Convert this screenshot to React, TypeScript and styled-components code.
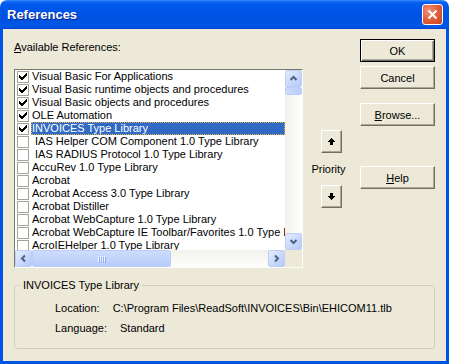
import styled, { createGlobalStyle } from "styled-components";

const GlobalStyle = createGlobalStyle`
  html, body {
    margin: 0;
    padding: 0;
    background: #ffffff;
  }
  body {
    font-family: "Liberation Sans", Arial, sans-serif;
    font-size: 11px;
    color: #000;
  }
`;

const Window = styled.div`
  width: 449px;
  height: 364px;
  display: flex;
  flex-direction: column;
`;

const TitleBar = styled.div`
  height: 29px;
  flex: none;
  display: flex;
  align-items: center;
  justify-content: space-between;
  padding: 0 6px 0 7px;
  border-radius: 7px 7px 0 0;
  background: linear-gradient(
    180deg,
    #3d8ef8 0px,
    #0a63f0 2px,
    #0058ee 5px,
    #0054e3 14px,
    #0052e0 21px,
    #005ae8 26px,
    #0046d5 29px
  );
  color: #fff;
  font: bold 13px "Liberation Sans", Arial, sans-serif;
  text-shadow: 1px 1px 0 #0a1f8c;
`;

const CloseButton = styled.div`
  width: 21px;
  height: 21px;
  box-sizing: border-box;
  border: 1px solid #fff;
  border-radius: 3px;
  background: radial-gradient(circle at 30% 30%, #f29377 0%, #e2613e 45%, #c9421f 100%);
  display: flex;
  align-items: center;
  justify-content: center;
`;

const Body = styled.div`
  flex: 1;
  display: flex;
  flex-direction: column;
  background: #ece9d8;
  border: 3px solid #0054e3;
  border-top: none;
  padding: 10px 11px 0 11px;
`;

const TopRow = styled.div`
  display: flex;
`;

const LeftCol = styled.div`
  width: 289px;
  display: flex;
  flex-direction: column;
`;

const FieldLabel = styled.div`
  margin-top: 2px;
  height: 13px;
  line-height: 13px;
`;

const ListBox = styled.div`
  margin-top: 15px;
  width: 289px;
  height: 199px;
  box-sizing: border-box;
  border: 1px solid;
  border-color: #7a7869 #fdfdfb #fdfdfb #7a7869;
  background: #fff;
  display: grid;
  grid-template-columns: 1fr 17px;
  grid-template-rows: 1fr 17px;
`;

const Rows = styled.div`
  overflow: hidden;
`;

const Row = styled.div`
  height: 13px;
  display: flex;
  align-items: center;
  padding-left: 2px;
`;

const CheckBox = styled.div`
  width: 12px;
  height: 12px;
  box-sizing: border-box;
  border: 1px solid #a5a39a;
  background: #fff;
  margin-right: 2px;
  flex: none;
  display: flex;
  align-items: center;
  justify-content: center;
`;

const ItemText = styled.div<{ $selected?: boolean }>`
  flex: 1;
  height: 13px;
  line-height: 13px;
  padding-left: 1px;
  white-space: pre;
  box-sizing: border-box;
  color: ${(p) => (p.$selected ? "#fff" : "#000")};
  background: ${(p) => (p.$selected ? "#316ac5" : "transparent")};
  outline: ${(p) => (p.$selected ? "1px dotted #e9b24a" : "none")};
  outline-offset: -1px;
`;

const VScroll = styled.div`
  display: flex;
  flex-direction: column;
  background: linear-gradient(90deg, #f3f1ec, #fefefe);
`;

const HScroll = styled.div`
  display: flex;
  background: linear-gradient(180deg, #f3f1ec, #fefefe);
`;

const Track = styled.div`
  flex: 1;
`;

const Corner = styled.div`
  background: #ece9d8;
`;

const ScrollButton = styled.div`
  width: 17px;
  height: 17px;
  flex: none;
  box-sizing: border-box;
  border: 1px solid #bccef6;
  border-radius: 2px;
  background: linear-gradient(135deg, #e4ecff 0%, #c6d7fc 60%, #b6cbf8 100%);
  display: flex;
  align-items: center;
  justify-content: center;
`;

const Thumb = styled.div<{ $size: number; $vertical?: boolean }>`
  flex: none;
  box-sizing: border-box;
  ${(p) => (p.$vertical ? `height: ${p.$size}px;` : `width: ${p.$size}px;`)}
  border: 1px solid #bccef6;
  border-radius: 2px;
  background: linear-gradient(
    ${(p) => (p.$vertical ? "90deg" : "180deg")},
    #cddcfd 0%,
    #c3d4fc 50%,
    #b8cbf9 100%
  );
  display: flex;
  align-items: center;
  justify-content: center;
`;

const Grip = styled.div`
  display: flex;
  gap: 1px;
`;

const GripLine = styled.div`
  width: 1px;
  height: 6px;
  background: #eef4fe;
  box-shadow: 1px 1px 0 #8cb0f8;
`;

const MidCol = styled.div`
  width: 57px;
  display: flex;
  flex-direction: column;
  align-items: center;
`;

const ButtonCol = styled.div`
  width: 75px;
  display: flex;
  flex-direction: column;
`;

const PushButton = styled.div<{ $default?: boolean; $gap?: number }>`
  height: 23px;
  width: 75px;
  box-sizing: border-box;
  margin-top: ${(p) => p.$gap ?? 0}px;
  display: flex;
  align-items: center;
  justify-content: center;
  background: #ece9d8;
  border: 1px solid;
  border-color: ${(p) => (p.$default ? "#000" : "#fff #716f64 #716f64 #fff")};
  box-shadow: ${(p) =>
    p.$default
      ? "inset 1px 1px 0 #fff, inset -1px -1px 0 #716f64, inset -2px -2px 0 #aca899"
      : "inset -1px -1px 0 #aca899"};
`;

const ArrowButton = styled.div<{ $gap: number }>`
  width: 21px;
  height: 23px;
  box-sizing: border-box;
  margin-top: ${(p) => p.$gap}px;
  display: flex;
  align-items: center;
  justify-content: center;
  background: #ece9d8;
  border: 1px solid;
  border-color: #fff #716f64 #716f64 #fff;
  box-shadow: inset -1px -1px 0 #aca899;
`;

const PriorityLabel = styled.div`
  margin-top: 10px;
  height: 13px;
  line-height: 13px;
  margin-right: 6px;
`;

const GroupBox = styled.fieldset`
  margin: 11px 0 0 0;
  padding: 0;
  height: 70px;
  box-sizing: border-box;
  border: 1px solid #d0d0bf;
  border-radius: 3px;
  display: flex;
  flex-direction: column;
  gap: 7px;
`;

const Legend = styled.legend`
  margin-left: 5px;
  padding: 0 3px;
  line-height: 13px;
`;

const InfoRow = styled.div<{ $first?: boolean }>`
  display: flex;
  gap: 13px;
  height: 13px;
  line-height: 13px;
  padding-left: 40px;
  margin-top: ${(p) => (p.$first ? "10px" : "0")};
`;

const U = styled.span`
  text-decoration: underline;
`;

type Ref = { name: string; checked?: boolean; selected?: boolean };

const refs: Ref[] = [
  { name: "Visual Basic For Applications", checked: true },
  { name: "Visual Basic runtime objects and procedures", checked: true },
  { name: "Visual Basic objects and procedures", checked: true },
  { name: "OLE Automation", checked: true },
  { name: "INVOICES Type Library", checked: true, selected: true },
  { name: " IAS Helper COM Component 1.0 Type Library" },
  { name: " IAS RADIUS Protocol 1.0 Type Library" },
  { name: "AccuRev 1.0 Type Library" },
  { name: "Acrobat" },
  { name: "Acrobat Access 3.0 Type Library" },
  { name: "Acrobat Distiller" },
  { name: "Acrobat WebCapture 1.0 Type Library" },
  { name: "Acrobat WebCapture IE Toolbar/Favorites 1.0 Type Library" },
  { name: "AcroIEHelper 1.0 Type Library" },
];

const Check = () => (
  <svg width="8" height="8" viewBox="0 0 8 8" shapeRendering="crispEdges">
    <path
      fill="#000"
      d="M7 0h1v1H7zM6 1h2v1H6zM0 2h1v1H0zM5 2h3v1H5zM0 3h2v1H0zM4 3h3v1H4zM0 4h6v1H0zM1 5h4v1H1zM2 6h2v1H2z"
    />
  </svg>
);

const Chevron = ({ dir }: { dir: "up" | "down" | "left" | "right" }) => {
  const rot = { up: 0, right: 90, down: 180, left: 270 }[dir];
  return (
    <svg width="9" height="9" viewBox="0 0 9 9">
      <polyline
        points="1.5,6 4.5,3 7.5,6"
        fill="none"
        stroke="#4d6185"
        strokeWidth="2"
        transform={`rotate(${rot} 4.5 4.5)`}
      />
    </svg>
  );
};

const BlackArrow = ({ down }: { down?: boolean }) => (
  <svg width="7" height="7" viewBox="0 0 7 7" shapeRendering="crispEdges">
    <path
      fill="#000"
      transform={down ? "rotate(180 3.5 3.5)" : undefined}
      d="M3 0h1v1H3zM2 1h3v1H2zM1 2h5v1H1zM0 3h7v1H0zM2 4h3v3H2z"
    />
  </svg>
);

export default function App() {
  return (
    <>
      <GlobalStyle />
      <Window>
        <TitleBar>
          <span>References</span>
          <CloseButton>
            <svg width="11" height="11" viewBox="0 0 11 11">
              <path d="M1.5 1.5 L9.5 9.5 M9.5 1.5 L1.5 9.5" stroke="#fff" strokeWidth="2" />
            </svg>
          </CloseButton>
        </TitleBar>
        <Body>
          <TopRow>
            <LeftCol>
              <FieldLabel>
                <U>A</U>vailable References:
              </FieldLabel>
              <ListBox>
                <Rows>
                  {refs.map((r) => (
                    <Row key={r.name}>
                      <CheckBox>{r.checked && <Check />}</CheckBox>
                      <ItemText $selected={r.selected}>{r.name}</ItemText>
                    </Row>
                  ))}
                </Rows>
                <VScroll>
                  <ScrollButton>
                    <Chevron dir="up" />
                  </ScrollButton>
                  <Thumb $vertical $size={8} />
                  <Track />
                  <ScrollButton>
                    <Chevron dir="down" />
                  </ScrollButton>
                </VScroll>
                <HScroll>
                  <ScrollButton>
                    <Chevron dir="left" />
                  </ScrollButton>
                  <Thumb $size={139}>
                    <Grip>
                      <GripLine />
                      <GripLine />
                      <GripLine />
                      <GripLine />
                    </Grip>
                  </Thumb>
                  <Track />
                  <ScrollButton>
                    <Chevron dir="right" />
                  </ScrollButton>
                </HScroll>
                <Corner />
              </ListBox>
            </LeftCol>
            <MidCol>
              <ArrowButton $gap={91}>
                <BlackArrow />
              </ArrowButton>
              <PriorityLabel>Priority</PriorityLabel>
              <ArrowButton $gap={9}>
                <BlackArrow down />
              </ArrowButton>
            </MidCol>
            <ButtonCol>
              <PushButton $default>OK</PushButton>
              <PushButton $gap={4}>Cancel</PushButton>
              <PushButton $gap={14}>
                <span>
                  <U>B</U>rowse...
                </span>
              </PushButton>
              <PushButton $gap={40}>
                <span>
                  <U>H</U>elp
                </span>
              </PushButton>
            </ButtonCol>
          </TopRow>
          <GroupBox>
            <Legend>INVOICES Type Library</Legend>
            <InfoRow $first>
              <span>Location:</span>
              <span>C:\Program Files\ReadSoft\INVOICES\Bin\EHICOM11.tlb</span>
            </InfoRow>
            <InfoRow>
              <span>Language:</span>
              <span>Standard</span>
            </InfoRow>
          </GroupBox>
        </Body>
      </Window>
    </>
  );
}
